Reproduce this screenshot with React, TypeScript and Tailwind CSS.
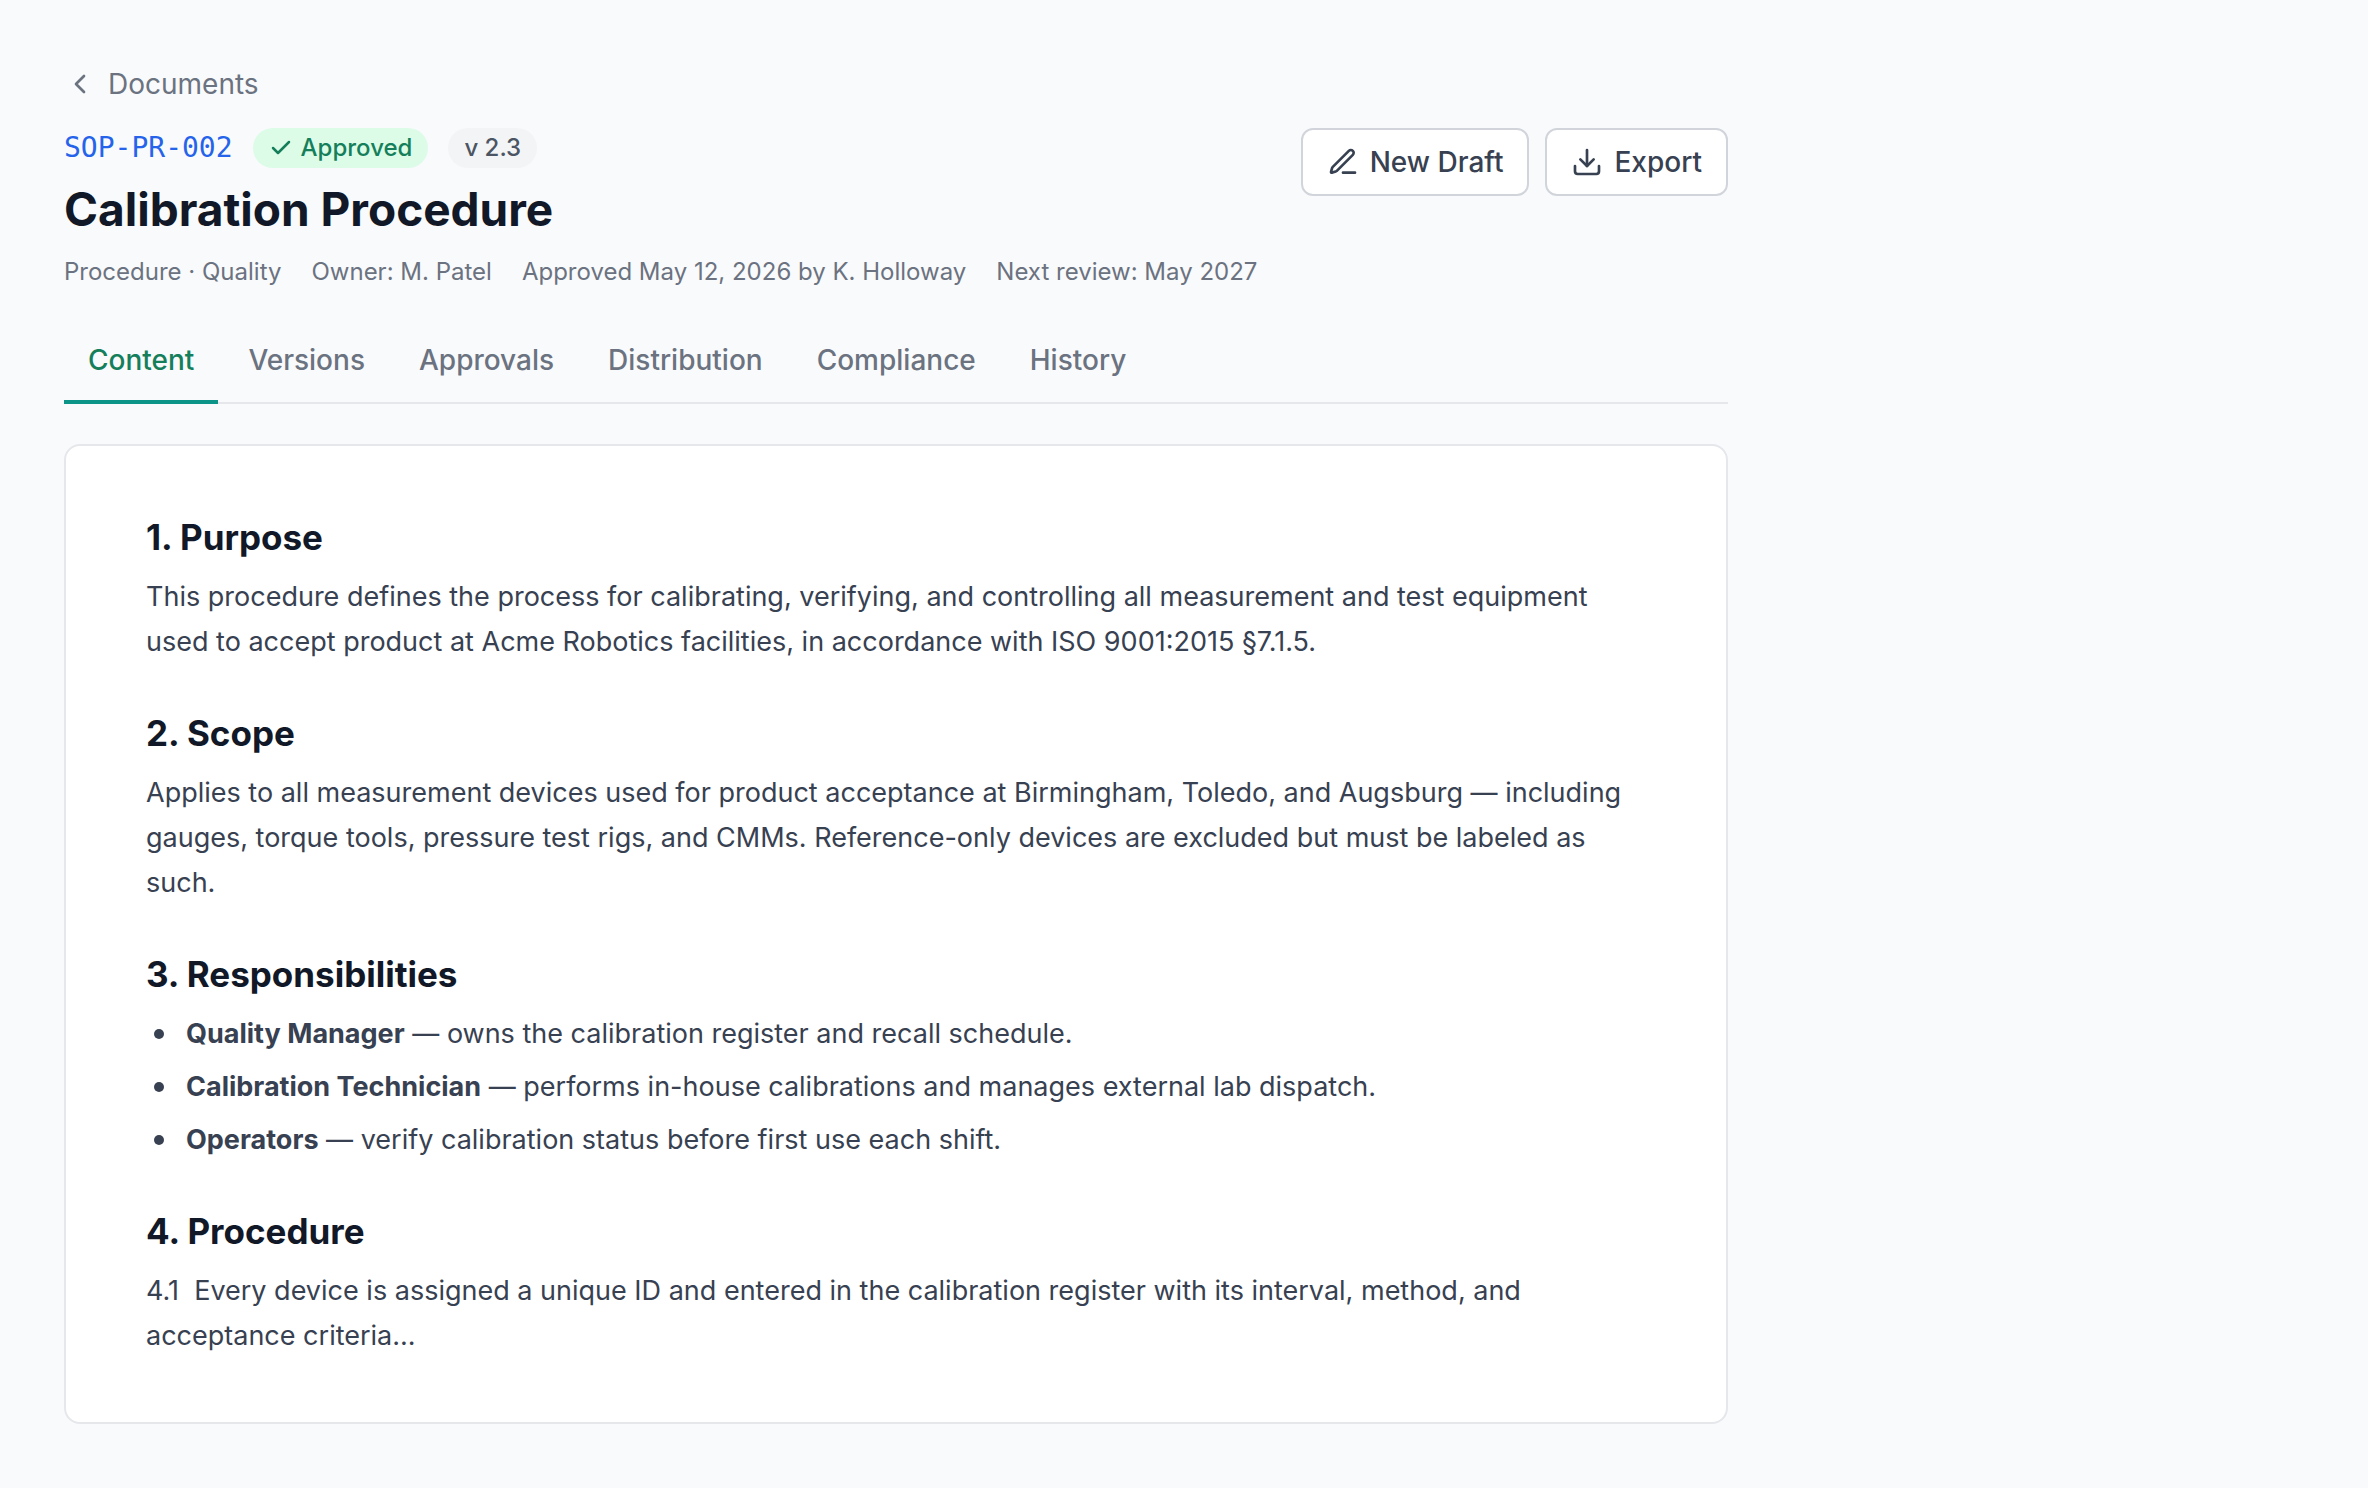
import { ChevronLeft, Check, Download } from "lucide-react";

const tabs = ["Content", "Versions", "Approvals", "Distribution", "Compliance", "History"];
const meta = [
  "Procedure · Quality",
  "Owner: M. Patel",
  "Approved May 12, 2026 by K. Holloway",
  "Next review: May 2027",
];
const roles = [
  ["Quality Manager", "owns the calibration register and recall schedule."],
  ["Calibration Technician", "performs in-house calibrations and manages external lab dispatch."],
  ["Operators", "verify calibration status before first use each shift."],
];

function PenIcon() {
  return (
    <svg viewBox="0 0 24 24" className="size-8" fill="none" stroke="currentColor" strokeWidth="2" strokeLinecap="round" strokeLinejoin="round" aria-hidden="true">
      <path d="M12 20h9" />
      <path d="M16.376 3.622a1 1 0 0 1 3.002 3.002L7.368 18.635a2 2 0 0 1-.855.506l-2.872.838a.5.5 0 0 1-.62-.62l.838-2.872a2 2 0 0 1 .506-.854z" />
    </svg>
  );
}

const buttonClass =
  "flex h-17 items-center gap-[11px] rounded-xl border-2 border-[#d1d5db] bg-white px-6 text-[28px] leading-8 font-medium text-[#374151]";

function Heading({ children }: { children: string }) {
  return <h2 className="mb-[10px] text-[35px] leading-[54px] font-bold text-[#111827]">{children}</h2>;
}

export default function App() {
  return (
    <div className="min-h-screen bg-[#f9fafc] px-16 py-16 font-['Inter',sans-serif] text-[#374151]">
      <main className="max-w-[1664px]">
        <a href="#documents" className="flex w-fit items-center gap-3 text-[28px] leading-10 text-[#6b7280]">
          <ChevronLeft className="size-8" strokeWidth={2} />
          Documents
        </a>
        <header className="mt-6 flex items-start justify-between">
          <div>
            <div className="flex items-center gap-5">
              <span className="font-['DejaVu_Sans_Mono',monospace] text-[28px] leading-10 text-[#2563eb]">SOP-PR-002</span>
              <span className="flex h-10 items-center gap-2 rounded-full bg-[#dcfce7] px-4 text-2xl font-medium text-[#157f5b]">
                <Check className="size-6" strokeWidth={2.5} />
                Approved
              </span>
              <span className="flex h-10 items-center rounded-full bg-[#f3f4f6] px-4 text-2xl font-medium text-[#4b5563]">v 2.3</span>
            </div>
            <h1 className="mt-3 text-[46px] leading-[58px] font-bold text-[#111827]">Calibration Procedure</h1>
            <div className="mt-4 flex gap-[30px] text-2xl leading-9 text-[#6b7280]">
              {meta.map((m) => (
                <span key={m}>{m}</span>
              ))}
            </div>
          </div>
          <div className="flex gap-4">
            <button type="button" className={buttonClass}>
              <PenIcon />
              New Draft
            </button>
            <button type="button" className={buttonClass}>
              <Download className="size-8" />
              Export
            </button>
          </div>
        </header>
        <nav className="mt-8 flex gap-1.5 border-b-2 border-[#e5e7eb]" role="tablist">
          {tabs.map((t, i) => (
            <button
              key={t}
              type="button"
              role="tab"
              aria-selected={i === 0}
              className={
                i === 0
                  ? "-mb-0.5 border-b-4 border-[#0d9488] px-6 pt-[18px] pb-[20px] text-[28px] leading-10 font-medium text-[#157f5b]"
                  : "-mb-0.5 border-b-4 border-transparent px-6 pt-[18px] pb-[20px] text-[28px] leading-10 font-medium text-[#6b7280]"
              }
            >
              {t}
            </button>
          ))}
        </nav>
        <article className="mt-10 rounded-2xl border-2 border-[#e5e7eb] bg-white px-20 py-16 text-[27px] leading-[45px]">
          <section>
            <Heading>1. Purpose</Heading>
            <p>
              This procedure defines the process for calibrating, verifying, and controlling all measurement and test
              equipment used to accept product at Acme Robotics facilities, in accordance with ISO 9001:2015 §7.1.5.
            </p>
          </section>
          <section className="mt-[42px]">
            <Heading>2. Scope</Heading>
            <p>
              Applies to all measurement devices used for product acceptance at Birmingham, Toledo, and Augsburg —
              including gauges, torque tools, pressure test rigs, and CMMs. Reference-only devices are excluded but must
              be labeled as such.
            </p>
          </section>
          <section className="mt-[42px]">
            <Heading>3. Responsibilities</Heading>
            <ul className="space-y-2">
              {roles.map(([role, duty]) => (
                <li
                  key={role}
                  className="relative pl-10 before:absolute before:top-[18px] before:left-2 before:size-[10px] before:rounded-full before:bg-[#374151]"
                >
                  <strong className="font-bold">{role}</strong> — {duty}
                </li>
              ))}
            </ul>
          </section>
          <section className="mt-[42px]">
            <Heading>4. Procedure</Heading>
            <p>
              4.1&nbsp; Every device is assigned a unique ID and entered in the calibration register with its interval,
              method, and acceptance criteria...
            </p>
          </section>
        </article>
      </main>
    </div>
  );
}
